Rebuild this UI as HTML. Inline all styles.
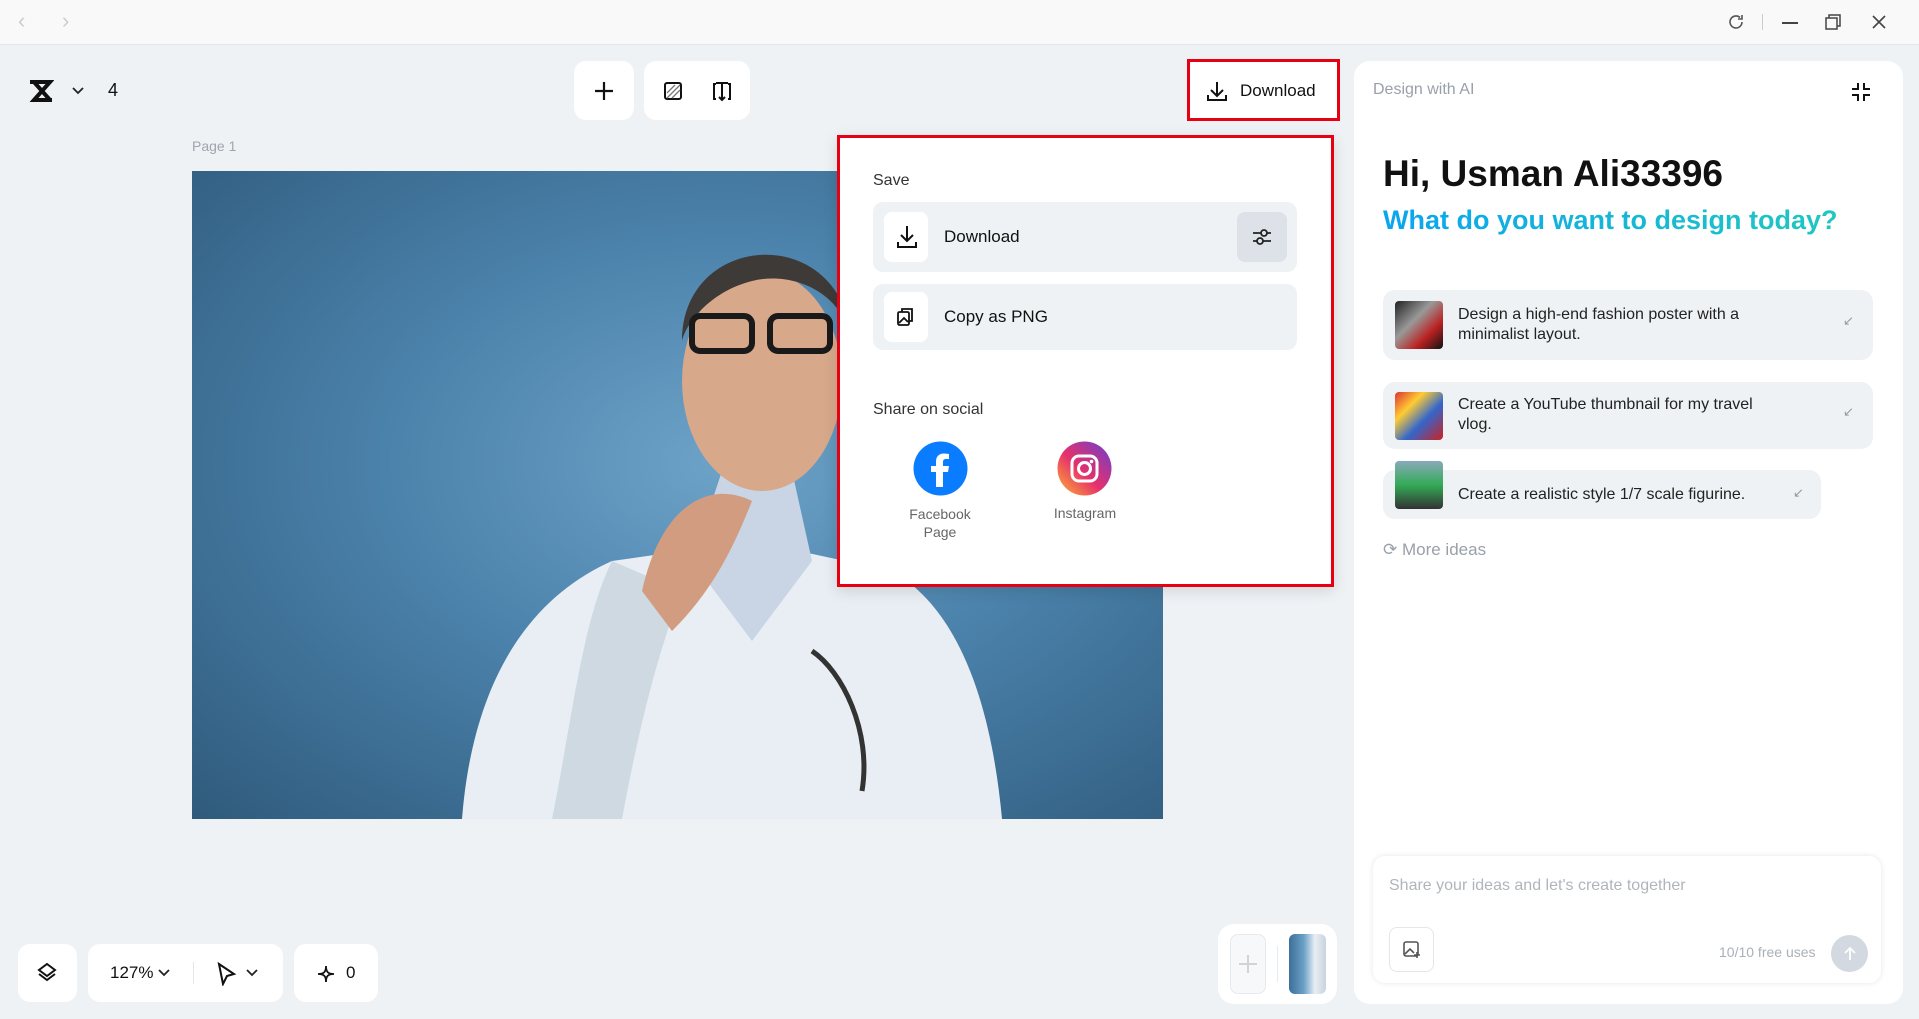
<!DOCTYPE html>
<html><head><meta charset="utf-8"><style>
*{box-sizing:border-box;margin:0;padding:0}
body{width:1919px;height:1019px;overflow:hidden;background:#eef2f5;font-family:"Liberation Sans",sans-serif;position:relative;color:#111}
.abs{position:absolute}
.pill{position:absolute;background:#fff;border-radius:12px}
.t{position:absolute;white-space:nowrap}
</style></head><body>
<!-- title bar -->
<div class="abs" style="left:0;top:0;width:1919px;height:45px;background:#f9f9f9;border-bottom:1px solid #e6e6e6"></div>
<div class="t" style="left:18px;top:8px;color:#ccc;font-size:22px">‹</div>
<div class="t" style="left:62px;top:8px;color:#ccc;font-size:22px">›</div>
<svg class="abs" style="left:1726px;top:12px" width="20" height="20" viewBox="0 0 20 20"><path d="M16 10a6 6 0 1 1-2-4.5M16 3v4h-4" fill="none" stroke="#555" stroke-width="1.6"/></svg>
<div class="abs" style="left:1762px;top:14px;width:1px;height:16px;background:#ccc"></div>
<div class="abs" style="left:1782px;top:22px;width:16px;height:1.5px;background:#444"></div>
<svg class="abs" style="left:1824px;top:13px" width="18" height="18"><rect x="2" y="5" width="11" height="11" fill="none" stroke="#444" stroke-width="1.5"/><path d="M5 5V2h11v11h-3" fill="none" stroke="#444" stroke-width="1.5"/></svg>
<svg class="abs" style="left:1870px;top:13px" width="18" height="18"><path d="M3 3l12 12M15 3L3 15" stroke="#444" stroke-width="1.6"/></svg>

<!-- top-left -->
<div class="pill" style="left:18px;top:61px;width:119px;height:59px;background:#eef2f5"></div>
<svg class="abs" style="left:28px;top:80px" width="26" height="22" viewBox="0 0 26 22"><path d="M2 2h20l-16 18h18M6 2l16 18" fill="none" stroke="#111" stroke-width="4"/></svg>
<svg class="abs" style="left:72px;top:86px" width="12" height="10"><path d="M1 2l5 5 5-5" fill="none" stroke="#222" stroke-width="1.8"/></svg>
<div class="t" style="left:108px;top:80px;font-size:18px">4</div>

<div class="pill" style="left:574px;top:61px;width:60px;height:59px"></div>
<svg class="abs" style="left:592px;top:79px" width="24" height="24"><path d="M12 3v18M3 12h18" stroke="#111" stroke-width="2.2"/></svg>
<div class="pill" style="left:644px;top:61px;width:106px;height:59px"></div>
<svg class="abs" style="left:663px;top:81px" width="20" height="20"><rect x="2" y="2" width="16" height="16" rx="2" fill="none" stroke="#111" stroke-width="2"/><path d="M4 12l8-8M4 17l13-13M9 17l8-8" stroke="#777" stroke-width="1.3"/></svg>
<svg class="abs" style="left:710px;top:79px" width="24" height="24"><path d="M6 5h-2v15h2M18 5h2v15h-2M6 4h12M12 3v18M9 18l3 3 3-3" fill="none" stroke="#111" stroke-width="2"/></svg>

<!-- download btn -->
<div class="pill" style="left:1187px;top:59px;width:153px;height:62px;border:3px solid #e60012;border-radius:0"></div>
<svg class="abs" style="left:1206px;top:80px" width="22" height="22"><path d="M11 2v13M5 10l6 6 6-6M2 15v5h18v-5" fill="none" stroke="#111" stroke-width="2"/></svg>
<div class="t" style="left:1240px;top:81px;font-size:17px">Download</div>

<div class="t" style="left:192px;top:138px;font-size:14px;color:#a0a6ae">Page 1</div>

<!-- photo -->
<div class="abs" style="left:192px;top:171px;width:971px;height:648px;overflow:hidden;background:radial-gradient(ellipse at 55% 45%,#6ea3c8 0%,#4b82ab 45%,#2f5a7c 100%)">
<svg width="971" height="648" viewBox="0 0 971 648">
<path d="M270 648 C280 520 330 430 420 390 L560 370 L700 400 C770 440 800 540 810 648Z" fill="#e8eef3"/>
<path d="M420 390 C390 450 380 550 360 648 L430 648 C450 540 470 470 490 420Z" fill="#cfd9e2"/>
<path d="M530 300 L500 390 L560 470 L620 390 L600 300Z" fill="#c9d4e4"/>
<ellipse cx="570" cy="210" rx="80" ry="110" fill="#d8a88b"/>
<path d="M490 170 C490 60 650 50 660 170 C650 120 600 100 560 110 C520 120 495 150 490 170Z" fill="#3e3a38"/>
<rect x="500" y="145" width="60" height="35" rx="8" fill="none" stroke="#1a1a1a" stroke-width="6"/>
<rect x="578" y="145" width="60" height="35" rx="8" fill="none" stroke="#1a1a1a" stroke-width="6"/>
<path d="M450 420 C470 330 520 310 560 330 C540 380 520 420 480 460Z" fill="#d19c80"/>
<path d="M620 480 C650 500 680 560 670 620" fill="none" stroke="#333" stroke-width="5"/>
</svg></div>

<!-- dropdown -->
<div class="abs" style="left:837px;top:135px;width:497px;height:452px;background:#fff;border:3px solid #e60012;box-shadow:0 4px 14px rgba(0,0,0,.12)"></div>
<div class="t" style="left:873px;top:172px;font-size:16px;color:#333">Save</div>
<div class="abs" style="left:873px;top:202px;width:424px;height:70px;background:#eff2f5;border-radius:10px"></div>
<div class="abs" style="left:884px;top:212px;width:44px;height:50px;background:#fff;border-radius:8px"></div>
<svg class="abs" style="left:895px;top:224px" width="24" height="26"><path d="M12 2v15M6 11l6 6 6-6M3 18v5h18v-5" fill="none" stroke="#111" stroke-width="2"/></svg>
<div class="t" style="left:944px;top:227px;font-size:17px">Download</div>
<div class="abs" style="left:1237px;top:212px;width:50px;height:50px;background:#dde2e8;border-radius:8px"></div>
<svg class="abs" style="left:1250px;top:225px" width="24" height="24"><path d="M3 8h18M3 16h18" stroke="#222" stroke-width="1.8"/><circle cx="14" cy="8" r="3" fill="#dde2e8" stroke="#222" stroke-width="1.8"/><circle cx="10" cy="16" r="3" fill="#dde2e8" stroke="#222" stroke-width="1.8"/></svg>
<div class="abs" style="left:873px;top:284px;width:424px;height:66px;background:#eff2f5;border-radius:10px"></div>
<div class="abs" style="left:884px;top:292px;width:44px;height:50px;background:#fff;border-radius:8px"></div>
<svg class="abs" style="left:896px;top:306px" width="20" height="22"><rect x="2" y="6" width="11" height="13" rx="1.5" fill="none" stroke="#111" stroke-width="1.8"/><path d="M6 6V3h10v12h-3M3 17l5-5 4 4" fill="none" stroke="#111" stroke-width="1.8"/></svg>
<div class="t" style="left:944px;top:307px;font-size:17px">Copy as PNG</div>
<div class="t" style="left:873px;top:401px;font-size:16px;color:#333">Share on social</div>
<svg class="abs" style="left:913px;top:441px" width="55" height="55" viewBox="0 0 55 55"><circle cx="27.5" cy="27.5" r="27" fill="#0a7cff"/><path d="M30 46V31h5l1-6h-6v-4c0-2 1-3 3-3h3v-5c-1 0-3-.5-5-.5-5 0-8 3-8 8v4.5h-5v6h5V46" fill="#fff"/></svg>
<svg class="abs" style="left:1057px;top:441px" width="55" height="55" viewBox="0 0 55 55"><defs><linearGradient id="ig" x1="0" y1="1" x2="1" y2="0"><stop offset="0" stop-color="#fdb531"/><stop offset=".45" stop-color="#e7306b"/><stop offset="1" stop-color="#6a3fd0"/></linearGradient></defs><circle cx="27.5" cy="27.5" r="27" fill="url(#ig)"/><rect x="15" y="15" width="25" height="25" rx="7" fill="none" stroke="#fff" stroke-width="3"/><circle cx="27.5" cy="27.5" r="6" fill="none" stroke="#fff" stroke-width="3"/><circle cx="34.5" cy="20.5" r="1.8" fill="#fff"/></svg>
<div class="t" style="left:940px;top:505px;font-size:14px;color:#666;transform:translateX(-50%);text-align:center;line-height:18px">Facebook<br>Page</div>
<div class="t" style="left:1085px;top:505px;font-size:14px;color:#666;transform:translateX(-50%)">Instagram</div>

<!-- right panel -->
<div class="pill" style="left:1354px;top:61px;width:549px;height:943px;border-radius:16px"></div>
<div class="t" style="left:1373px;top:81px;font-size:16px;color:#9aa0a8">Design with AI</div>
<svg class="abs" style="left:1850px;top:81px" width="22" height="22"><path d="M8 2v6H2M14 2v6h6M8 20v-6H2M14 20v-6h6" fill="none" stroke="#111" stroke-width="2"/></svg>
<div class="t" style="left:1383px;top:153px;font-size:37px;font-weight:bold">Hi, Usman Ali33396</div>
<div class="t" style="left:1383px;top:205px;font-size:27px;font-weight:bold;background:linear-gradient(90deg,#0aa5f0,#21c7c0);-webkit-background-clip:text;color:transparent">What do you want to design today?</div>

<div class="abs" style="left:1383px;top:290px;width:490px;height:70px;background:#eff2f5;border-radius:12px"></div>
<div class="abs" style="left:1395px;top:301px;width:48px;height:48px;border-radius:4px;background:linear-gradient(135deg,#222,#999 40%,#b22 70%,#111)"></div>
<div class="t" style="left:1458px;top:305px;font-size:16px;line-height:20px;color:#222">Design a high-end fashion poster with a<br>minimalist layout.</div>
<div class="t" style="left:1843px;top:313px;font-size:13px;color:#999">↙</div>

<div class="abs" style="left:1383px;top:382px;width:490px;height:67px;background:#eff2f5;border-radius:12px"></div>
<div class="abs" style="left:1395px;top:392px;width:48px;height:48px;border-radius:4px;background:linear-gradient(135deg,#d33,#fc3 30%,#36c 60%,#c22)"></div>
<div class="t" style="left:1458px;top:395px;font-size:16px;line-height:20px;color:#222">Create a YouTube thumbnail for my travel<br>vlog.</div>
<div class="t" style="left:1843px;top:404px;font-size:13px;color:#999">↙</div>

<div class="abs" style="left:1383px;top:470px;width:438px;height:49px;background:#eff2f5;border-radius:12px"></div>
<div class="abs" style="left:1395px;top:461px;width:48px;height:48px;border-radius:4px;background:linear-gradient(180deg,#8ab 0%,#3a5 50%,#333 100%)"></div>
<div class="t" style="left:1458px;top:486px;font-size:16px;color:#222">Create a realistic style 1/7 scale figurine.</div>
<div class="t" style="left:1793px;top:485px;font-size:13px;color:#999">↙</div>

<div class="t" style="left:1383px;top:540px;font-size:17px;color:#9aa0a8">⟳ More ideas</div>

<div class="abs" style="left:1373px;top:856px;width:508px;height:127px;background:#fff;border-radius:12px;box-shadow:0 0 6px rgba(0,0,0,.1)"></div>
<div class="t" style="left:1389px;top:877px;font-size:16px;color:#b0b5bc">Share your ideas and let's create together</div>
<div class="abs" style="left:1389px;top:927px;width:45px;height:45px;border:1px solid #e3e6ea;border-radius:8px"></div>
<svg class="abs" style="left:1402px;top:940px" width="20" height="20"><rect x="2" y="2" width="14" height="14" rx="2" fill="none" stroke="#555" stroke-width="1.6"/><path d="M3 14l5-5 4 4M15 12v6M12 15h6" fill="none" stroke="#555" stroke-width="1.6"/></svg>
<div class="t" style="left:1719px;top:944px;font-size:14px;color:#aab0b7">10/10 free uses</div>
<div class="abs" style="left:1831px;top:935px;width:37px;height:37px;border-radius:50%;background:#d3d9e0"></div>
<svg class="abs" style="left:1840px;top:944px" width="20" height="20"><path d="M10 16V4M5 9l5-5 5 5" fill="none" stroke="#fff" stroke-width="1.8"/></svg>

<!-- bottom -->
<div class="pill" style="left:18px;top:944px;width:59px;height:58px"></div>
<svg class="abs" style="left:36px;top:962px" width="22" height="22"><path d="M11 2l8 6-8 6-8-6z M3 12l8 6 8-6" fill="none" stroke="#111" stroke-width="2"/></svg>
<div class="pill" style="left:88px;top:944px;width:195px;height:58px"></div>
<div class="t" style="left:110px;top:963px;font-size:17px">127%</div>
<svg class="abs" style="left:158px;top:968px" width="12" height="10"><path d="M1 2l5 5 5-5" fill="none" stroke="#222" stroke-width="1.8"/></svg>
<div class="abs" style="left:193px;top:962px;width:1px;height:22px;background:#e3e6ea"></div>
<svg class="abs" style="left:216px;top:962px" width="22" height="24"><path d="M3 2l15 10-7 2-4 8z" fill="none" stroke="#111" stroke-width="2"/></svg>
<svg class="abs" style="left:246px;top:968px" width="12" height="10"><path d="M1 2l5 5 5-5" fill="none" stroke="#222" stroke-width="1.8"/></svg>
<div class="pill" style="left:294px;top:944px;width:84px;height:58px"></div>
<svg class="abs" style="left:316px;top:964px" width="20" height="20"><path d="M10 2C10 8 12 10 18 10C12 10 10 12 10 18C10 12 8 10 2 10C8 10 10 8 10 2Z" fill="none" stroke="#111" stroke-width="1.8"/></svg>
<div class="t" style="left:346px;top:963px;font-size:17px">0</div>

<div class="pill" style="left:1218px;top:924px;width:119px;height:80px;border-radius:16px"></div>
<div class="abs" style="left:1230px;top:934px;width:36px;height:60px;border:1px solid #e6e9ed;border-radius:8px;background:#f6f8fa"></div>
<svg class="abs" style="left:1237px;top:953px" width="22" height="22"><path d="M11 2v18M2 11h18" stroke="#d0d4d9" stroke-width="2"/></svg>
<div class="abs" style="left:1277px;top:946px;width:1px;height:36px;background:#e6e9ed"></div>
<div class="abs" style="left:1289px;top:934px;width:37px;height:60px;border-radius:6px;background:linear-gradient(90deg,#3d6f98,#6aa0c6 40%,#e8eef3 70%,#c8d3de)"></div>
</body></html>
